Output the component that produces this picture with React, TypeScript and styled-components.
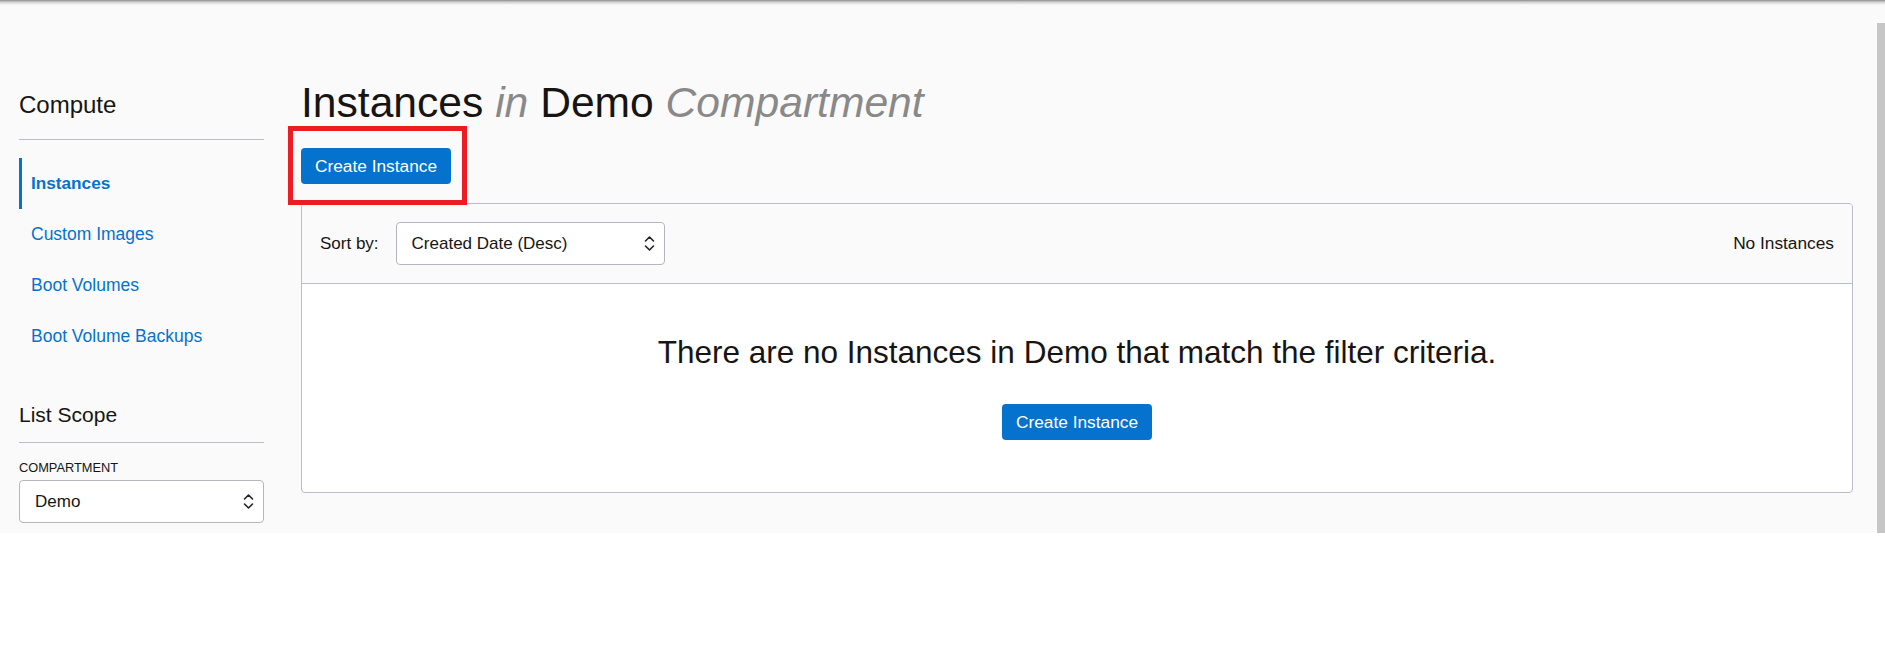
import React from "react";
import styled, { createGlobalStyle, css } from "styled-components";

const GlobalStyle = createGlobalStyle`
  html, body { margin: 0; padding: 0; background: #ffffff; }
  body { font-family: "Liberation Sans", Arial, sans-serif; color: #161513; }
  * { box-sizing: border-box; }
`;

const BLUE = "#0572ce";
const TEXT = "#161513";
const LINE = "#babdc4";

const Page = styled.div`
  height: 533px;
  display: flex;
  background: linear-gradient(to bottom, #8c8c8c 0, #cfcfcf 2px, #fafafa 5px) top / 100% 5px no-repeat, #fafafa;
`;

const Content = styled.div`
  flex: 1;
  display: flex;
  gap: 37px;
  padding: 0 24px 0 19px;
`;

const Sidebar = styled.aside`
  width: 245px;
  flex: none;
  padding-top: 91px;
  display: flex;
  flex-direction: column;
`;

const SideHeading = styled.h2<{ $size: number; $line: number; $top: number; $pad: number }>`
  margin: ${(p) => p.$top}px 0 0;
  font-size: ${(p) => p.$size}px;
  line-height: ${(p) => p.$line}px;
  font-weight: 400;
  color: ${TEXT};
  padding-bottom: ${(p) => p.$pad}px;
  border-bottom: 1px solid ${LINE};
`;

const NavList = styled.nav`
  margin-top: 18px;
  display: flex;
  flex-direction: column;
`;

const NavItem = styled.a<{ $active?: boolean }>`
  height: 51px;
  display: flex;
  align-items: center;
  padding-left: 9px;
  border-left: 3px solid transparent;
  font-size: 17.5px;
  color: ${BLUE};
  text-decoration: none;
  ${(p) =>
    p.$active &&
    css`
      border-left-color: ${BLUE};
      font-weight: 700;
      font-size: 17.2px;
    `}
`;

const FieldLabel = styled.div`
  margin-top: 17px;
  font-size: 12.8px;
  line-height: 15px;
  color: ${TEXT};
  text-transform: uppercase;
`;

const SelectBox = styled.div<{ $width?: number }>`
  height: 43px;
  ${(p) => (p.$width ? `width: ${p.$width}px;` : "")}
  display: flex;
  align-items: center;
  justify-content: space-between;
  padding: 0 9px 0 15px;
  background: #ffffff;
  border: 1px solid #b3b6bd;
  border-radius: 4px;
  font-size: 17px;
  color: ${TEXT};
`;

const SidebarSelect = styled(SelectBox)`
  margin-top: 5px;
`;

const Main = styled.main`
  flex: 1;
  min-width: 0;
  padding-top: 78px;
  display: flex;
  flex-direction: column;
`;

const Title = styled.h1`
  margin: 0;
  font-size: 42.6px;
  line-height: 48px;
  font-weight: 400;
  color: ${TEXT};
  white-space: nowrap;

  em {
    color: #898989;
    font-style: italic;
  }
`;

const Toolbar = styled.div`
  margin-top: 22px;
  display: flex;
`;

const Highlight = styled.div`
  position: relative;
  display: inline-flex;

  &::after {
    content: "";
    position: absolute;
    top: -22px;
    bottom: -21px;
    left: -13px;
    right: -16px;
    border: 5px solid #ed1c24;
    pointer-events: none;
  }
`;

const Button = styled.button`
  height: 36px;
  padding: 0 14px;
  border: none;
  border-radius: 4px;
  background: ${BLUE};
  color: #ffffff;
  font-family: "Liberation Sans", Arial, sans-serif;
  font-size: 17.3px;
  cursor: pointer;
`;

const Card = styled.section`
  margin-top: 19px;
  border: 1px solid ${LINE};
  border-radius: 4px;
  background: #ffffff;
  overflow: hidden;
`;

const CardHeader = styled.div`
  height: 80px;
  display: flex;
  align-items: center;
  gap: 17px;
  padding: 0 18px;
  background: #fafafa;
  border-bottom: 1px solid ${LINE};
  font-size: 17px;
  color: ${TEXT};
`;

const Count = styled.div`
  margin-left: auto;
  font-size: 17.3px;
`;

const CardBody = styled.div`
  padding: 50px 0 52px;
  display: flex;
  flex-direction: column;
  align-items: center;
  gap: 34px;
`;

const EmptyMessage = styled.p`
  margin: 0;
  font-size: 31.5px;
  line-height: 36px;
  color: ${TEXT};
`;

const Scrollbar = styled.div`
  width: 8px;
  flex: none;
  padding-top: 23px;
  display: flex;
`;

const Thumb = styled.div`
  flex: 1;
  background: #c6c6c6;
`;

const Chevrons = () => (
  <svg width="11" height="17" viewBox="0 0 11 17" fill="none" stroke="#222" strokeWidth="1.6" strokeLinecap="round" strokeLinejoin="round">
    <path d="M1.5 6 L5.5 2 L9.5 6" />
    <path d="M1.5 11 L5.5 15 L9.5 11" />
  </svg>
);

const navItems = [
  { label: "Instances", active: true },
  { label: "Custom Images" },
  { label: "Boot Volumes" },
  { label: "Boot Volume Backups" },
];

export default function App() {
  return (
    <>
      <GlobalStyle />
      <Page>
        <Content>
          <Sidebar>
            <SideHeading $size={24} $line={28} $top={0} $pad={20}>
              Compute
            </SideHeading>
            <NavList>
              {navItems.map((item) => (
                <NavItem key={item.label} $active={item.active}>
                  {item.label}
                </NavItem>
              ))}
            </NavList>
            <SideHeading $size={21} $line={24} $top={41} $pad={15}>
              List Scope
            </SideHeading>
            <FieldLabel>Compartment</FieldLabel>
            <SidebarSelect>
              <span>Demo</span>
              <Chevrons />
            </SidebarSelect>
          </Sidebar>
          <Main>
            <Title>
              Instances <em>in</em> Demo <em>Compartment</em>
            </Title>
            <Toolbar>
              <Highlight>
                <Button>Create Instance</Button>
              </Highlight>
            </Toolbar>
            <Card>
              <CardHeader>
                <span>Sort by:</span>
                <SelectBox $width={269}>
                  <span>Created Date (Desc)</span>
                  <Chevrons />
                </SelectBox>
                <Count>No Instances</Count>
              </CardHeader>
              <CardBody>
                <EmptyMessage>There are no Instances in Demo that match the filter criteria.</EmptyMessage>
                <Button>Create Instance</Button>
              </CardBody>
            </Card>
          </Main>
        </Content>
        <Scrollbar>
          <Thumb />
        </Scrollbar>
      </Page>
    </>
  );
}
